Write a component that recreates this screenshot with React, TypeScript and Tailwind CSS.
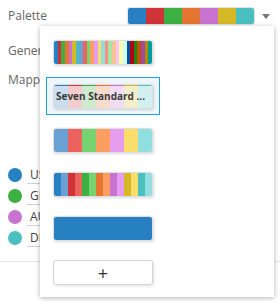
import React from "react";

const MAIN = ["#2680c2", "#cf3338", "#3cb043", "#e57431", "#c873d0", "#d5b826", "#4bbfc0"];
const LIGHT = ["#6aa1d4", "#ec625c", "#77d370", "#fe9d62", "#e79ded", "#f9de6c", "#8fdfe0"];
const PASTEL = ["#f98f83", "#a8e3a1", "#fbc095", "#f6c6f9", "#fffea6", "#cefcfd", "#0055a0"];
const DARK = ["#b60013", "#148a14", "#c75000", "#a14aa5", "#ae8d00", "#019d99"];
const BIG = [...MAIN, ...LIGHT, ...PASTEL, ...DARK];
const MIXED = MAIN.flatMap((c, i) => [c, LIGHT[i]]);

function Stripes({ colors }: { colors: string[] }) {
  return (
    <div className="flex h-full w-full overflow-hidden rounded-[2px]">
      {colors.map((c, i) => (
        <div key={i} className="h-full flex-1" style={{ backgroundColor: c }} />
      ))}
    </div>
  );
}

function Swatch({ children }: { children: React.ReactNode }) {
  return (
    <div className="h-[25px] w-[100px] rounded-[3px] border border-[#dedede] bg-white shadow-[1px_1px_3px_rgba(0,0,0,0.15)]">
      {children}
    </div>
  );
}

const LEGEND = [
  { c: "#2680c2", t: "USA" },
  { c: "#3cb043", t: "GBR" },
  { c: "#c873d0", t: "AUS" },
  { c: "#4bbfc0", t: "DEU" },
];

export default function App() {
  return (
    <div
      className="relative h-[302px] w-[280px] overflow-hidden bg-white text-[12px] text-[#666]"
      style={{ fontFamily: '"Open Sans", "Liberation Sans", sans-serif' }}
    >
      <div className="flex h-[32px] items-center pl-[8px] pr-[10px]">
        <span>Palette</span>
        <div className="ml-auto flex h-[18px] w-[128px] overflow-hidden rounded-[3px] border border-[#e2e2e2]">
          {MAIN.map((c, i) => (
            <div key={i} className="h-full flex-1" style={{ backgroundColor: c }} />
          ))}
        </div>
        <svg width="8" height="5" viewBox="0 0 8 5" className="ml-[7px]">
          <path d="M0 0h8L4 5z" fill="#777" />
        </svg>
      </div>
      <div className="flex h-[34px] items-center pl-[8px] pt-[4px]">General</div>
      <div className="flex h-[28px] items-center pl-[8px]">Mapping</div>

      <div className="mt-[74px] flex flex-col gap-[7px] pl-[8px]">
        {LEGEND.map((l) => (
          <div key={l.t} className="flex h-[14px] items-center">
            <div className="h-[14px] w-[14px] rounded-full" style={{ backgroundColor: l.c }} />
            <div className="ml-[5px] w-[60px] border-b border-[#d0d0d0] pl-[3px] leading-[16px] text-[#444]">
              {l.t}
            </div>
          </div>
        ))}
      </div>
      <div className="mt-[16px] border-t border-[#e4e4e4]" />

      <div className="absolute left-[40px] top-[26px] flex h-[271px] w-[234px] flex-col bg-white pl-[13px] pt-[14px] shadow-[0_1px_5px_rgba(0,0,0,0.3)]">
        <div className="flex h-[44px] shrink-0 flex-col">
          <Swatch>
            <Stripes colors={BIG} />
          </Swatch>
        </div>
        <div className="flex h-[44px] shrink-0 flex-col">
          <div className="-mx-[7px] -mt-[7px] w-[114px] border border-[#1ba3df] bg-[#eef6fb] px-[6px] pb-[5px] pt-[6px]">
            <Swatch>
              <div className="relative h-full w-full">
                <div className="flex h-full w-full overflow-hidden rounded-[2px]">
                  {MAIN.map((c, i) => (
                    <div key={i} className="relative h-full flex-1">
                      <div className="absolute inset-0 opacity-25" style={{ backgroundColor: c }} />
                      <div className="absolute left-0 right-0 top-0 h-[1px]" style={{ backgroundColor: c }} />
                    </div>
                  ))}
                </div>
                <div className="absolute inset-0 flex items-center whitespace-nowrap pl-[2px] text-[10px] font-bold text-[#3a3a3a]">
                  Seven Standard ...
                </div>
              </div>
            </Swatch>
          </div>
        </div>
        <div className="flex h-[44px] shrink-0 flex-col">
          <Swatch>
            <Stripes colors={LIGHT} />
          </Swatch>
        </div>
        <div className="flex h-[44px] shrink-0 flex-col">
          <Swatch>
            <Stripes colors={MIXED} />
          </Swatch>
        </div>
        <div className="flex h-[44px] shrink-0 flex-col">
          <Swatch>
            <div className="h-full w-full rounded-[2px] bg-[#2680c2]" />
          </Swatch>
        </div>
        <div className="flex h-[44px] shrink-0 flex-col">
          <div className="flex h-[25px] w-[100px] items-center justify-center rounded-[3px] border border-[#d4d4d4] bg-white text-[18px] leading-none text-[#333] shadow-[1px_1px_3px_rgba(0,0,0,0.12)]">
            +
          </div>
        </div>
      </div>
    </div>
  );
}
